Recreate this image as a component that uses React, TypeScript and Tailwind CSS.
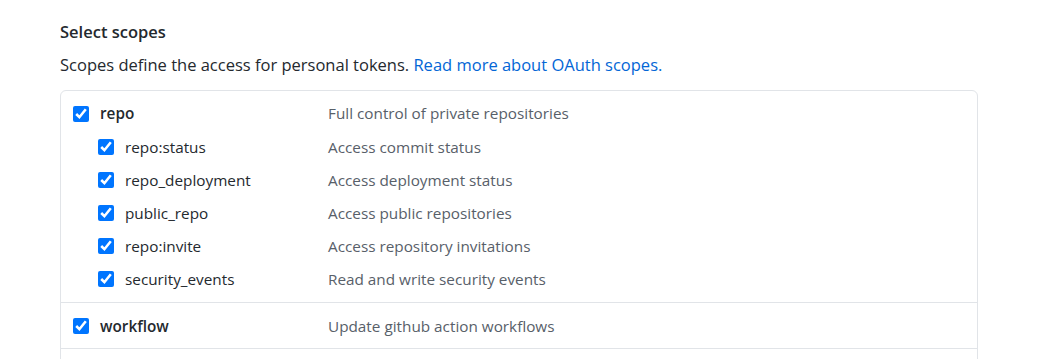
import React from 'react';

type Scope = { name: string; desc: string };

const groups: { parent: Scope; children: Scope[] }[] = [
  {
    parent: { name: 'repo', desc: 'Full control of private repositories' },
    children: [
      { name: 'repo:status', desc: 'Access commit status' },
      { name: 'repo_deployment', desc: 'Access deployment status' },
      { name: 'public_repo', desc: 'Access public repositories' },
      { name: 'repo:invite', desc: 'Access repository invitations' },
      { name: 'security_events', desc: 'Read and write security events' },
    ],
  },
  {
    parent: { name: 'workflow', desc: 'Update github action workflows' },
    children: [],
  },
];

function Check() {
  return (
    <input
      type="checkbox"
      checked
      readOnly
      className="m-0 h-4 w-4 shrink-0 accent-[#0075ff]"
    />
  );
}

function Row({ scope, child, tall }: { scope: Scope; child?: boolean; tall?: boolean }) {
  return (
    <div className={`flex items-center ${tall ? 'h-[34px]' : 'h-[33px]'}`}>
      <div className={`flex w-[255px] items-center gap-[11px] ${child ? 'pl-[25px]' : ''}`}>
        <Check />
        <span className={child ? 'text-[#24292e]' : 'font-semibold text-[#24292e]'}>
          {scope.name}
        </span>
      </div>
      <span className="text-[#586069]">{scope.desc}</span>
    </div>
  );
}

export default function App() {
  return (
    <div
      className="h-[359px] overflow-hidden bg-white pl-[60px] pr-[78px] pt-[20px] text-[15.3px] leading-normal"
      style={{ fontFamily: '"Open Sans", "Noto Sans", sans-serif' }}
    >
      <h3 className="text-[16.5px] font-semibold text-[#24292e]">Select scopes</h3>
      <p className="mt-[8px] text-[16.5px] text-[#24292e]">
        Scopes define the access for personal tokens.{' '}
        <a href="#" className="text-[#0366d6]">Read more about OAuth scopes.</a>
      </p>
      <div className="mt-[12px] h-[400px] rounded-md border border-[#e1e4e8]">
        {groups.map(g => {
          const hasKids = g.children.length > 0;
          return (
            <div
              key={g.parent.name}
              className={`border-b border-[#e1e4e8] px-[12px] ${hasKids ? 'pb-[6px] pt-[6px]' : 'pb-[5px] pt-[7px]'}`}
            >
              <Row scope={g.parent} tall={hasKids} />
              {g.children.map(c => (
                <Row key={c.name} scope={c} child />
              ))}
            </div>
          );
        })}
      </div>
    </div>
  );
}
